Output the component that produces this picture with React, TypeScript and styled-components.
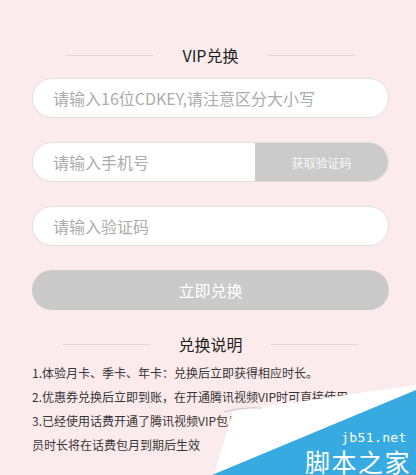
import React from "react";
import styled, { createGlobalStyle } from "styled-components";

const GlobalStyle = createGlobalStyle`
    html, body {
        margin: 0;
        padding: 0;
        background: #fcebec;
    }
    body {
        font-family: "Noto Sans CJK SC", "Noto Sans", sans-serif;
    }
`;

const Page = styled.div`
    position: relative;
    width: 416px;
    height: 475px;
    overflow: hidden;
    background: #fcebec;
    padding: 44px 27px 0 32px;
    box-sizing: border-box;
    display: flex;
    flex-direction: column;
`;

const SectionTitle = styled.div<{ $gap?: number }>`
    display: flex;
    align-items: center;
    justify-content: center;
    gap: ${(p) => p.$gap ?? 29}px;
    height: 22px;
    font-size: 16px;
    line-height: 22px;
    color: #1e1e1e;
`;

const Rule = styled.span`
    width: 87px;
    height: 1px;
    background: #e6d3d4;
`;

const Form = styled.div`
    display: flex;
    flex-direction: column;
    gap: 24px;
    margin-top: 12px;
`;

const Field = styled.div`
    display: flex;
    height: 40px;
    border: 1px solid #e5dcdc;
    border-radius: 20px;
    background: #fff;
    overflow: hidden;
    box-sizing: border-box;
`;

const Input = styled.input`
    flex: 1;
    min-width: 0;
    border: none;
    outline: none;
    background: transparent;
    padding: 0 0 0 20px;
    font-family: "Noto Sans CJK SC", sans-serif;
    font-size: 16px;
    color: #333;
    &::placeholder {
        color: #acacac;
    }
`;

const CodeButton = styled.button`
    width: 133px;
    border: none;
    background: #cbcbcb;
    color: #f7f7f7;
    font-family: "Noto Sans CJK SC", sans-serif;
    font-size: 12px;
    padding: 0;
`;

const SubmitButton = styled.button`
    height: 40px;
    border: none;
    border-radius: 20px;
    background: #cacaca;
    color: #fff;
    font-family: "Noto Sans CJK SC", sans-serif;
    font-size: 16px;
    padding: 0;
`;

const NotesHead = styled.div`
    margin-top: 23px;
`;

const Notes = styled.div`
    margin-top: 6px;
    font-size: 12px;
    line-height: 24px;
    color: #363636;
    white-space: nowrap;
`;

const Note = styled.div``;

const Watermark = styled.div`
    position: absolute;
    left: 210px;
    top: 380px;
    width: 206px;
    height: 95px;
`;

const Curl = styled.svg`
    position: absolute;
    inset: 0;
`;

const Domain = styled.span`
    position: absolute;
    left: 131px;
    top: 51px;
    font-family: "DejaVu Sans Mono", monospace;
    font-size: 13px;
    line-height: 14px;
    letter-spacing: 0.4px;
    color: #fff;
`;

const Brand = styled.span`
    position: absolute;
    left: 95px;
    top: 69px;
    font-size: 25px;
    line-height: 25px;
    letter-spacing: 1.5px;
    color: #fff;
`;

const notes = [
    "1.体验月卡、季卡、年卡：兑换后立即获得相应时长。",
    "2.优惠券兑换后立即到账，在开通腾讯视频VIP时可直接使用",
    "3.已经使用话费开通了腾讯视频VIP包月的用户，兑换后会",
    "员时长将在话费包月到期后生效",
];

const App: React.FC = () => {
    return (
        <>
            <GlobalStyle />
            <Page>
                <SectionTitle>
                    <Rule />
                    VIP兑换
                    <Rule />
                </SectionTitle>

                <Form>
                    <Field>
                        <Input placeholder="请输入16位CDKEY,请注意区分大小写" />
                    </Field>
                    <Field>
                        <Input placeholder="请输入手机号" />
                        <CodeButton>获取验证码</CodeButton>
                    </Field>
                    <Field>
                        <Input placeholder="请输入验证码" />
                    </Field>
                    <SubmitButton>立即兑换</SubmitButton>
                </Form>

                <NotesHead>
                    <SectionTitle $gap={28}>
                        <Rule />
                        兑换说明
                        <Rule />
                    </SectionTitle>
                </NotesHead>

                <Notes>
                    {notes.map((n) => (
                        <Note key={n}>{n}</Note>
                    ))}
                </Notes>

                <Watermark>
                    <Curl width="206" height="95" viewBox="0 0 206 95">
                        <polygon points="23,31 206,5 206,10 4,95" fill="#ffffff" />
                        <path d="M14,32 Q30,27 52,28" stroke="#b9b1b1" strokeWidth="1" fill="none" opacity="0.7" />
                        <polygon points="206,10 206,95 2,95" fill="#37aae1" />
                    </Curl>
                    <Domain>jb51.net</Domain>
                    <Brand>脚本之家</Brand>
                </Watermark>
            </Page>
        </>
    );
};

export default App;
